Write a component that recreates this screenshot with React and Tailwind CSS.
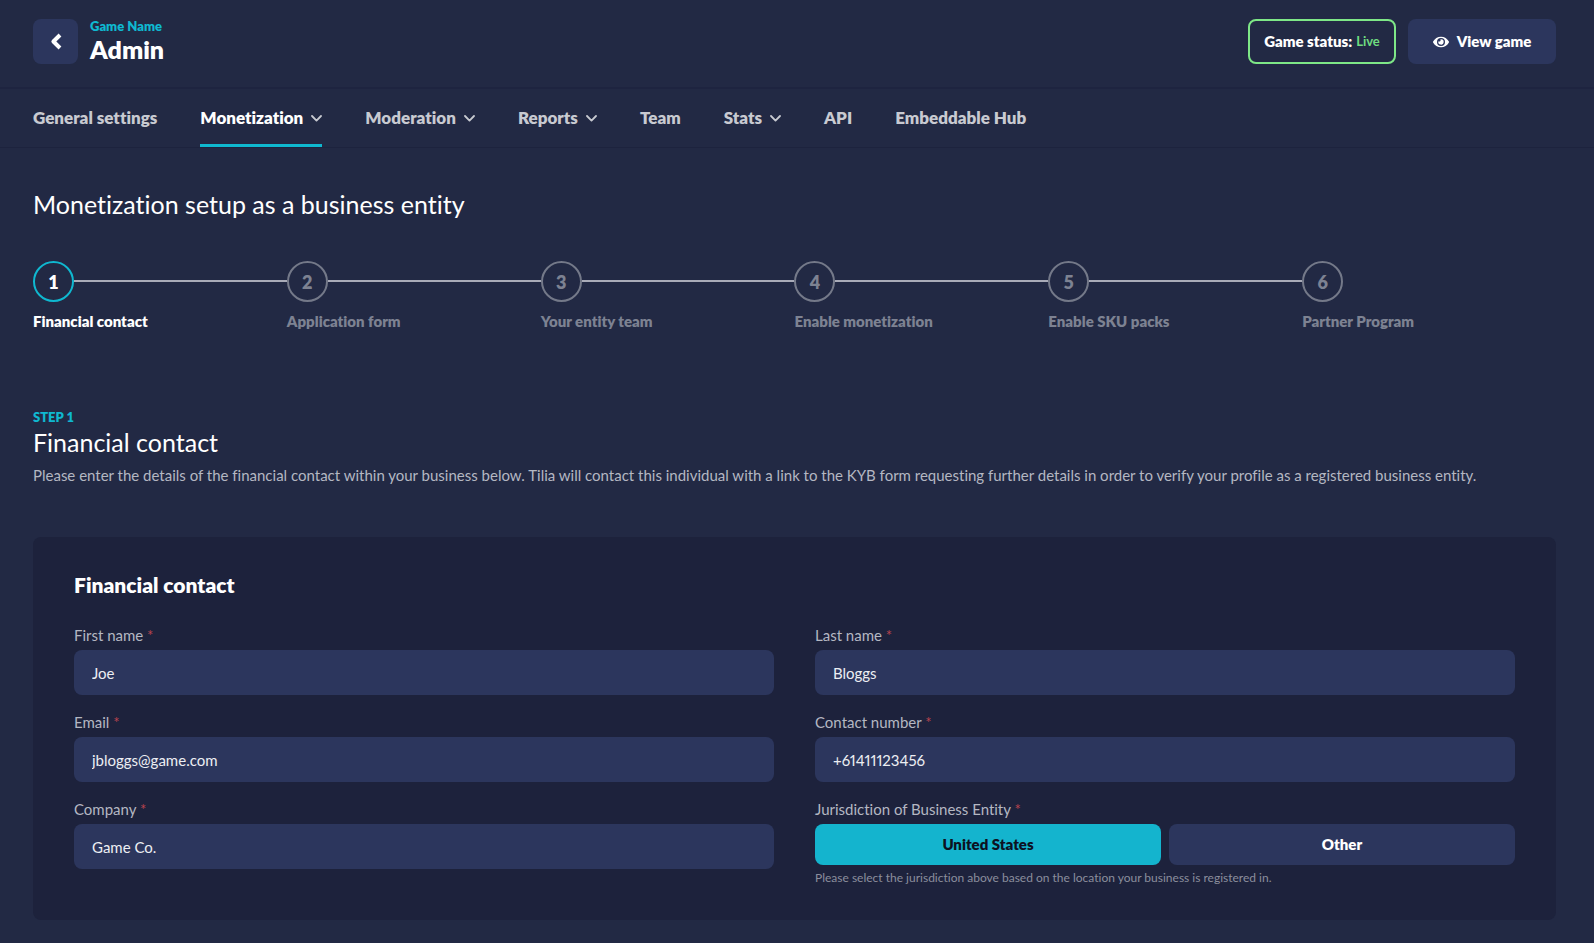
import React, { useState } from "react";
import { FaEye } from "react-icons/fa";

const navItems = [
  { name: "General settings" },
  { name: "Monetization", menu: true, active: true },
  { name: "Moderation", menu: true },
  { name: "Reports", menu: true },
  { name: "Team" },
  { name: "Stats", menu: true },
  { name: "API" },
  { name: "Embeddable Hub" },
];

const steps = [
  "Financial contact",
  "Application form",
  "Your entity team",
  "Enable monetization",
  "Enable SKU packs",
  "Partner Program",
];

function BackIcon() {
  return (
    <svg className="h-[17px] w-3" viewBox="0 0 12 17" fill="none" aria-hidden="true">
      <path d="M10 2L3.4 8.5l6.6 6.500" stroke="currentColor" strokeWidth="4" strokeLinejoin="round" />
    </svg>
  );
}

function Caret() {
  return (
    <svg className="h-[7px] w-[11px]" viewBox="0 0 11 7" fill="none" aria-hidden="true">
      <path
        d="M1 1l4.5 4.6L10 1"
        stroke="#c8cad1"
        strokeWidth="1.8"
        strokeLinecap="round"
        strokeLinejoin="round"
      />
    </svg>
  );
}

function Required() {
  return <span className="text-[#b8434e]"> *</span>;
}

function Field({ id, label, type = "text", value }) {
  return (
    <div className="flex flex-col gap-[3px]">
      <label htmlFor={id} className="text-[15px] leading-6 text-[#b4b7c2]">
        {label}
        <Required />
      </label>
      <input
        id={id}
        type={type}
        defaultValue={value}
        className="h-[45px] w-full rounded-lg bg-[#2c365d] px-[18px] text-[15px] text-[#eceef3] proportional-nums outline-none focus:ring-1 focus:ring-[#07c1d8]"
      />
    </div>
  );
}

function Header() {
  return (
    <header className="flex items-start justify-between border-b-2 border-[#1e2440] pt-[19px] pr-[38px] pb-[23px] pl-[33px]">
      <div className="flex h-[45px] items-center gap-3">
        <button
          type="button"
          aria-label="Back"
          className="flex size-[45px] items-center justify-center rounded-lg bg-[#2c365d] text-white"
        >
          <BackIcon />
        </button>
        <div className="flex flex-col">
          <a href="#game" className="text-[13px] leading-4 font-extrabold text-[#0fb8d0]">
            Game Name
          </a>
          <h1 className="text-[25px] leading-[31px] font-extrabold text-white">Admin</h1>
        </div>
      </div>
      <div className="flex gap-3">
        <button
          type="button"
          className="flex h-[45px] w-[148px] items-center justify-center gap-1 rounded-lg border-2 border-[#7ee787] text-[15px] font-extrabold text-white"
        >
          Game status:
          <span className="text-[13px] font-bold text-[#6fdc80]">Live</span>
        </button>
        <button
          type="button"
          className="flex h-[45px] w-[148px] items-center justify-center gap-2 rounded-lg bg-[#2c365d] text-[15px] font-extrabold text-white"
        >
          <FaEye className="size-4" />
          View game
        </button>
      </div>
    </header>
  );
}

function Nav() {
  return (
    <nav className="flex h-[59px] gap-[43px] border-b border-[#1d233e] px-[33px]">
      {navItems.map((item) => (
        <a
          key={item.name}
          href="#nav"
          className={
            item.active
              ? "flex items-center gap-2 border-b-3 border-[#0fb8d0] pt-[3px] text-[17px] font-extrabold text-white"
              : "flex items-center gap-2 border-b-3 border-transparent pt-[3px] text-[17px] font-extrabold text-[#c8cad1]"
          }
        >
          {item.name}
          {item.menu && <Caret />}
        </a>
      ))}
    </nav>
  );
}

function Stepper() {
  return (
    <ol className="mt-[41px] grid grid-cols-6">
      {steps.map((step, index) => (
        <li key={step} className="flex flex-col gap-[7px]">
          <div className="flex items-center">
            <span
              className={
                index === 0
                  ? "flex size-[41px] shrink-0 items-center justify-center rounded-full border-2 border-[#0fb8d0] text-lg font-extrabold text-white"
                  : "flex size-[41px] shrink-0 items-center justify-center rounded-full border-2 border-[#747989] text-lg font-extrabold text-[#7d8292]"
              }
            >
              {index + 1}
            </span>
            {index < steps.length - 1 && <span className="mb-0.5 h-0.5 flex-1 bg-[#a9abb8]" />}
          </div>
          <span
            className={
              index === 0
                ? "text-[15px] leading-6 font-extrabold text-white"
                : "text-[15px] leading-6 font-extrabold text-[#7d8292]"
            }
          >
            {step}
          </span>
        </li>
      ))}
    </ol>
  );
}

function Jurisdiction() {
  const [selected, setSelected] = useState("United States");

  return (
    <div role="group" aria-labelledby="jurisdiction" className="flex flex-col gap-[3px]">
      <span id="jurisdiction" className="text-[15px] leading-6 text-[#b4b7c2]">
        Jurisdiction of Business Entity
        <Required />
      </span>
      <div className="grid grid-cols-2 gap-2">
        {["United States", "Other"].map((option) => (
          <button
            key={option}
            type="button"
            aria-pressed={selected === option}
            onClick={() => setSelected(option)}
            className={
              selected === option
                ? "h-[41px] rounded-lg bg-[#14b4ce] text-[15px] font-extrabold text-[#0d1122]"
                : "h-[41px] rounded-lg bg-[#2c365d] text-[15px] font-extrabold text-white"
            }
          >
            {option}
          </button>
        ))}
      </div>
      <p className="text-[12px] leading-5 text-[#8b8e9d]">
        Please select the jurisdiction above based on the location your business is registered in.
      </p>
    </div>
  );
}

function App() {
  return (
    <div className="min-h-screen bg-[#222944] font-['Lato',sans-serif] [font-variant-ligatures:none]">
      <Header />
      <Nav />
      <main className="pt-10 pr-[38px] pb-[23px] pl-[33px]">
        <h2 className="text-[25px] leading-8 text-white">Monetization setup as a business entity</h2>
        <Stepper />
        <section className="mt-[74px]">
          <p className="text-[13px] leading-5 font-extrabold text-[#0fb8d0]">STEP 1</p>
          <h2 className="text-[25px] leading-[30px] text-white">Financial contact</h2>
          <p className="mt-1.5 text-[15px] leading-6 text-[#b4b7c2]">
            Please enter the details of the financial contact within your business below. Tilia will contact this
            individual with a link to the KYB form requesting further details in order to verify your profile as a
            registered business entity.
          </p>
        </section>
        <form className="mt-[50px] rounded-lg bg-[#1d223c] px-[41px] py-8">
          <h3 className="text-[21px] leading-8 font-extrabold text-white">Financial contact</h3>
          <div className="mt-[22px] grid grid-cols-2 gap-x-[41px] gap-y-[15px]">
            <Field id="first-name" label="First name" value="Joe" />
            <Field id="last-name" label="Last name" value="Bloggs" />
            <Field id="email" label="Email" type="email" value="jbloggs@game.com" />
            <Field id="contact-number" label="Contact number" type="tel" value="+61411123456" />
            <Field id="company" label="Company" value="Game Co." />
            <Jurisdiction />
          </div>
        </form>
      </main>
    </div>
  );
}

export default App;
